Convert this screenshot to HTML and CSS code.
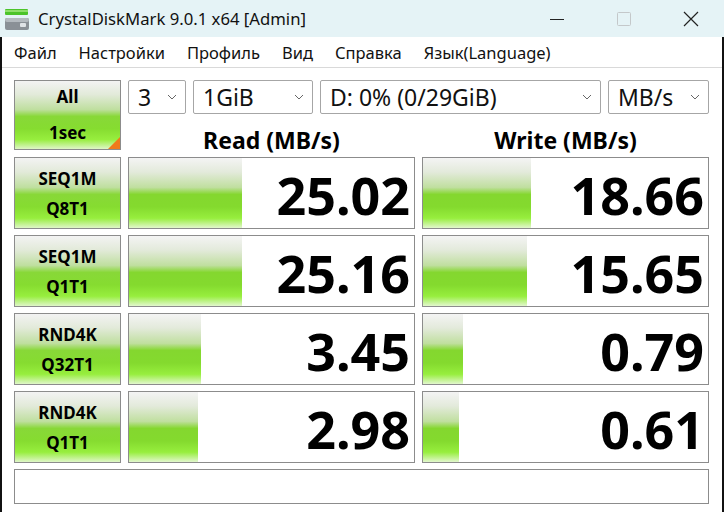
FILE: index.html
```html
<!DOCTYPE html>
<html lang="ru">
<head>
    <meta charset="UTF-8">
    <title>CrystalDiskMark 9.0.1 x64 [Admin]</title>
    <link rel="stylesheet" href="styles.css">
</head>
<body>
    <div class="window">
        <div class="titlebar">
            <svg class="app-icon" width="26" height="26" viewBox="0 0 26 26">
                <rect x="1" y="3" width="23" height="6" rx="1" fill="#4cc42a"/>
                <rect x="1" y="4" width="23" height="2" fill="#8ee06a"/>
                <rect x="1" y="12" width="24" height="12" rx="2" fill="#8a9096"/>
                <rect x="1" y="12" width="24" height="4" rx="2" fill="#b4babf"/>
                <rect x="16" y="17" width="6" height="4" rx="1" fill="#dfe3e6"/>
            </svg>
            <span class="title">CrystalDiskMark 9.0.1 x64 [Admin]</span>
            <div class="controls">
                <span class="ctl">
                    <svg width="16" height="16" viewBox="0 0 16 16"><line x1="1" y1="8.5" x2="15" y2="8.5" stroke="#222" stroke-width="1"/></svg>
                </span>
                <span class="ctl">
                    <svg width="16" height="16" viewBox="0 0 16 16"><rect x="1.5" y="1.5" width="13" height="13" rx="1" fill="none" stroke="#c4c8ca" stroke-width="1"/></svg>
                </span>
                <span class="ctl">
                    <svg width="16" height="16" viewBox="0 0 16 16"><path d="M1 1 L15 15 M15 1 L1 15" stroke="#222" stroke-width="1.2"/></svg>
                </span>
            </div>
        </div>

        <div class="client">
            <div class="menubar">
                <span>Файл</span>
                <span>Настройки</span>
                <span>Профиль</span>
                <span>Вид</span>
                <span>Справка</span>
                <span>Язык(Language)</span>
            </div>

            <div class="grid">
                <div class="btn btn-all">
                    <span>All</span>
                    <span>1sec</span>
                    <i class="corner"></i>
                </div>
                <div class="top">
                    <div class="selects">
                        <div class="select s-count"><span>3</span><svg width="10" height="6" viewBox="0 0 10 6"><polyline points="1,1 5,5 9,1" fill="none" stroke="#666" stroke-width="1"/></svg></div>
                        <div class="select s-size"><span>1GiB</span><svg width="10" height="6" viewBox="0 0 10 6"><polyline points="1,1 5,5 9,1" fill="none" stroke="#666" stroke-width="1"/></svg></div>
                        <div class="select s-drive"><span>D: 0% (0/29GiB)</span><svg width="10" height="6" viewBox="0 0 10 6"><polyline points="1,1 5,5 9,1" fill="none" stroke="#666" stroke-width="1"/></svg></div>
                        <div class="select s-unit"><span>MB/s</span><svg width="10" height="6" viewBox="0 0 10 6"><polyline points="1,1 5,5 9,1" fill="none" stroke="#666" stroke-width="1"/></svg></div>
                    </div>
                    <div class="heads">
                        <div class="head">Read (MB/s)</div>
                        <div class="head">Write (MB/s)</div>
                    </div>
                </div>

                <div class="btn"><span>SEQ1M</span><span>Q8T1</span></div>
                <div class="value"><div class="bar" style="width: 113px"></div><span class="num">25.02</span></div>
                <div class="value"><div class="bar" style="width: 108px"></div><span class="num">18.66</span></div>

                <div class="btn"><span>SEQ1M</span><span>Q1T1</span></div>
                <div class="value"><div class="bar" style="width: 113px"></div><span class="num">25.16</span></div>
                <div class="value"><div class="bar" style="width: 104px"></div><span class="num">15.65</span></div>

                <div class="btn"><span>RND4K</span><span>Q32T1</span></div>
                <div class="value"><div class="bar" style="width: 72px"></div><span class="num">3.45</span></div>
                <div class="value"><div class="bar" style="width: 40px"></div><span class="num">0.79</span></div>

                <div class="btn"><span>RND4K</span><span>Q1T1</span></div>
                <div class="value"><div class="bar" style="width: 69px"></div><span class="num">2.98</span></div>
                <div class="value"><div class="bar" style="width: 36px"></div><span class="num">0.61</span></div>

                <div class="comment"></div>
            </div>
        </div>
    </div>
</body>
</html>
```

FILE: styles.css
```css
body {
    margin: 0;
    background-color: #fff;
    font-family: "Noto Sans", "Open Sans", sans-serif;
    color: #000;
}
.window {
    width: 724px;
    height: 519px;
    overflow: hidden;
}
.titlebar {
    height: 37px;
    background-color: #e5f3f6;
    display: flex;
    align-items: center;
}
.app-icon {
    margin-left: 4px;
    margin-right: 8px;
}
.title {
    font-size: 16.7px;
    color: #111;
}
.controls {
    margin-left: auto;
    display: flex;
}
.ctl {
    width: 67px;
    display: flex;
    justify-content: center;
    align-items: center;
    height: 37px;
}
.client {
    height: 475px;
    border-left: 2px solid #111;
    border-right: 2px solid #111;
    box-sizing: border-box;
}
.menubar {
    height: 30px;
    border-bottom: 1px solid #d9d9d9;
    display: flex;
    align-items: center;
    gap: 22px;
    padding-left: 12px;
    font-size: 16.5px;
    color: #111;
}
.grid {
    display: grid;
    grid-template-columns: 107px 287px 287px;
    grid-template-rows: 71px 72px 72px 72px 72px 35px;
    column-gap: 7px;
    row-gap: 6px;
    padding: 12px 0 0 12px;
}
.btn {
    box-sizing: border-box;
    border: 1px solid #8c8c8c;
    background: linear-gradient(to bottom, #f3f3f3 0%, #e2ead9 20%, #bfdf9f 42%, #88d838 52%, #86dc30 70%, #97ee3e 86%, #dff6c8 100%);
    display: flex;
    flex-direction: column;
    align-items: center;
    justify-content: center;
    font-weight: bold;
    font-size: 17px;
    line-height: 30px;
    padding-top: 2px;
    position: relative;
}
.btn-all {
    height: 70px;
    line-height: 36px;
    padding-top: 0;
}
.corner {
    position: absolute;
    right: 0;
    bottom: 0;
    width: 0;
    height: 0;
    border-left: 12px solid transparent;
    border-bottom: 12px solid #f07a1a;
}
.top {
    grid-column: 2 / 4;
    display: flex;
    flex-direction: column;
}
.selects {
    display: flex;
    gap: 7px;
    height: 34px;
}
.select {
    box-sizing: border-box;
    border: 1px solid #a6a6a6;
    border-radius: 2px;
    background-color: #fff;
    display: flex;
    align-items: center;
    justify-content: space-between;
    padding: 0 8px 0 9px;
    font-size: 23px;
    color: #111;
}
.s-count { width: 58px; }
.s-size { width: 120px; }
.s-drive { width: 281px; }
.s-unit { width: 101px; }
.heads {
    display: grid;
    grid-template-columns: 287px 287px;
    column-gap: 7px;
    flex: 1;
}
.head {
    text-align: center;
    font-weight: bold;
    font-size: 23px;
    line-height: 30px;
    padding-top: 11px;
}
.value {
    box-sizing: border-box;
    border: 1px solid #8c8c8c;
    background-color: #fff;
    position: relative;
    display: flex;
    align-items: center;
    justify-content: flex-end;
}
.bar {
    position: absolute;
    left: 0;
    top: 0;
    bottom: 0;
    background: linear-gradient(to bottom, #f4f4f4 0%, #e3eadb 20%, #c0df9f 42%, #84d72f 52%, #84da2e 70%, #97ee3e 86%, #e2f7cd 100%);
}
.num {
    position: relative;
    font-size: 52px;
    font-weight: bold;
    line-height: 52px;
    padding: 4px 4px 0 0;
}
.comment {
    grid-column: 1 / 4;
    box-sizing: border-box;
    border: 1px solid #8c8c8c;
    background-color: #fff;
}
```
